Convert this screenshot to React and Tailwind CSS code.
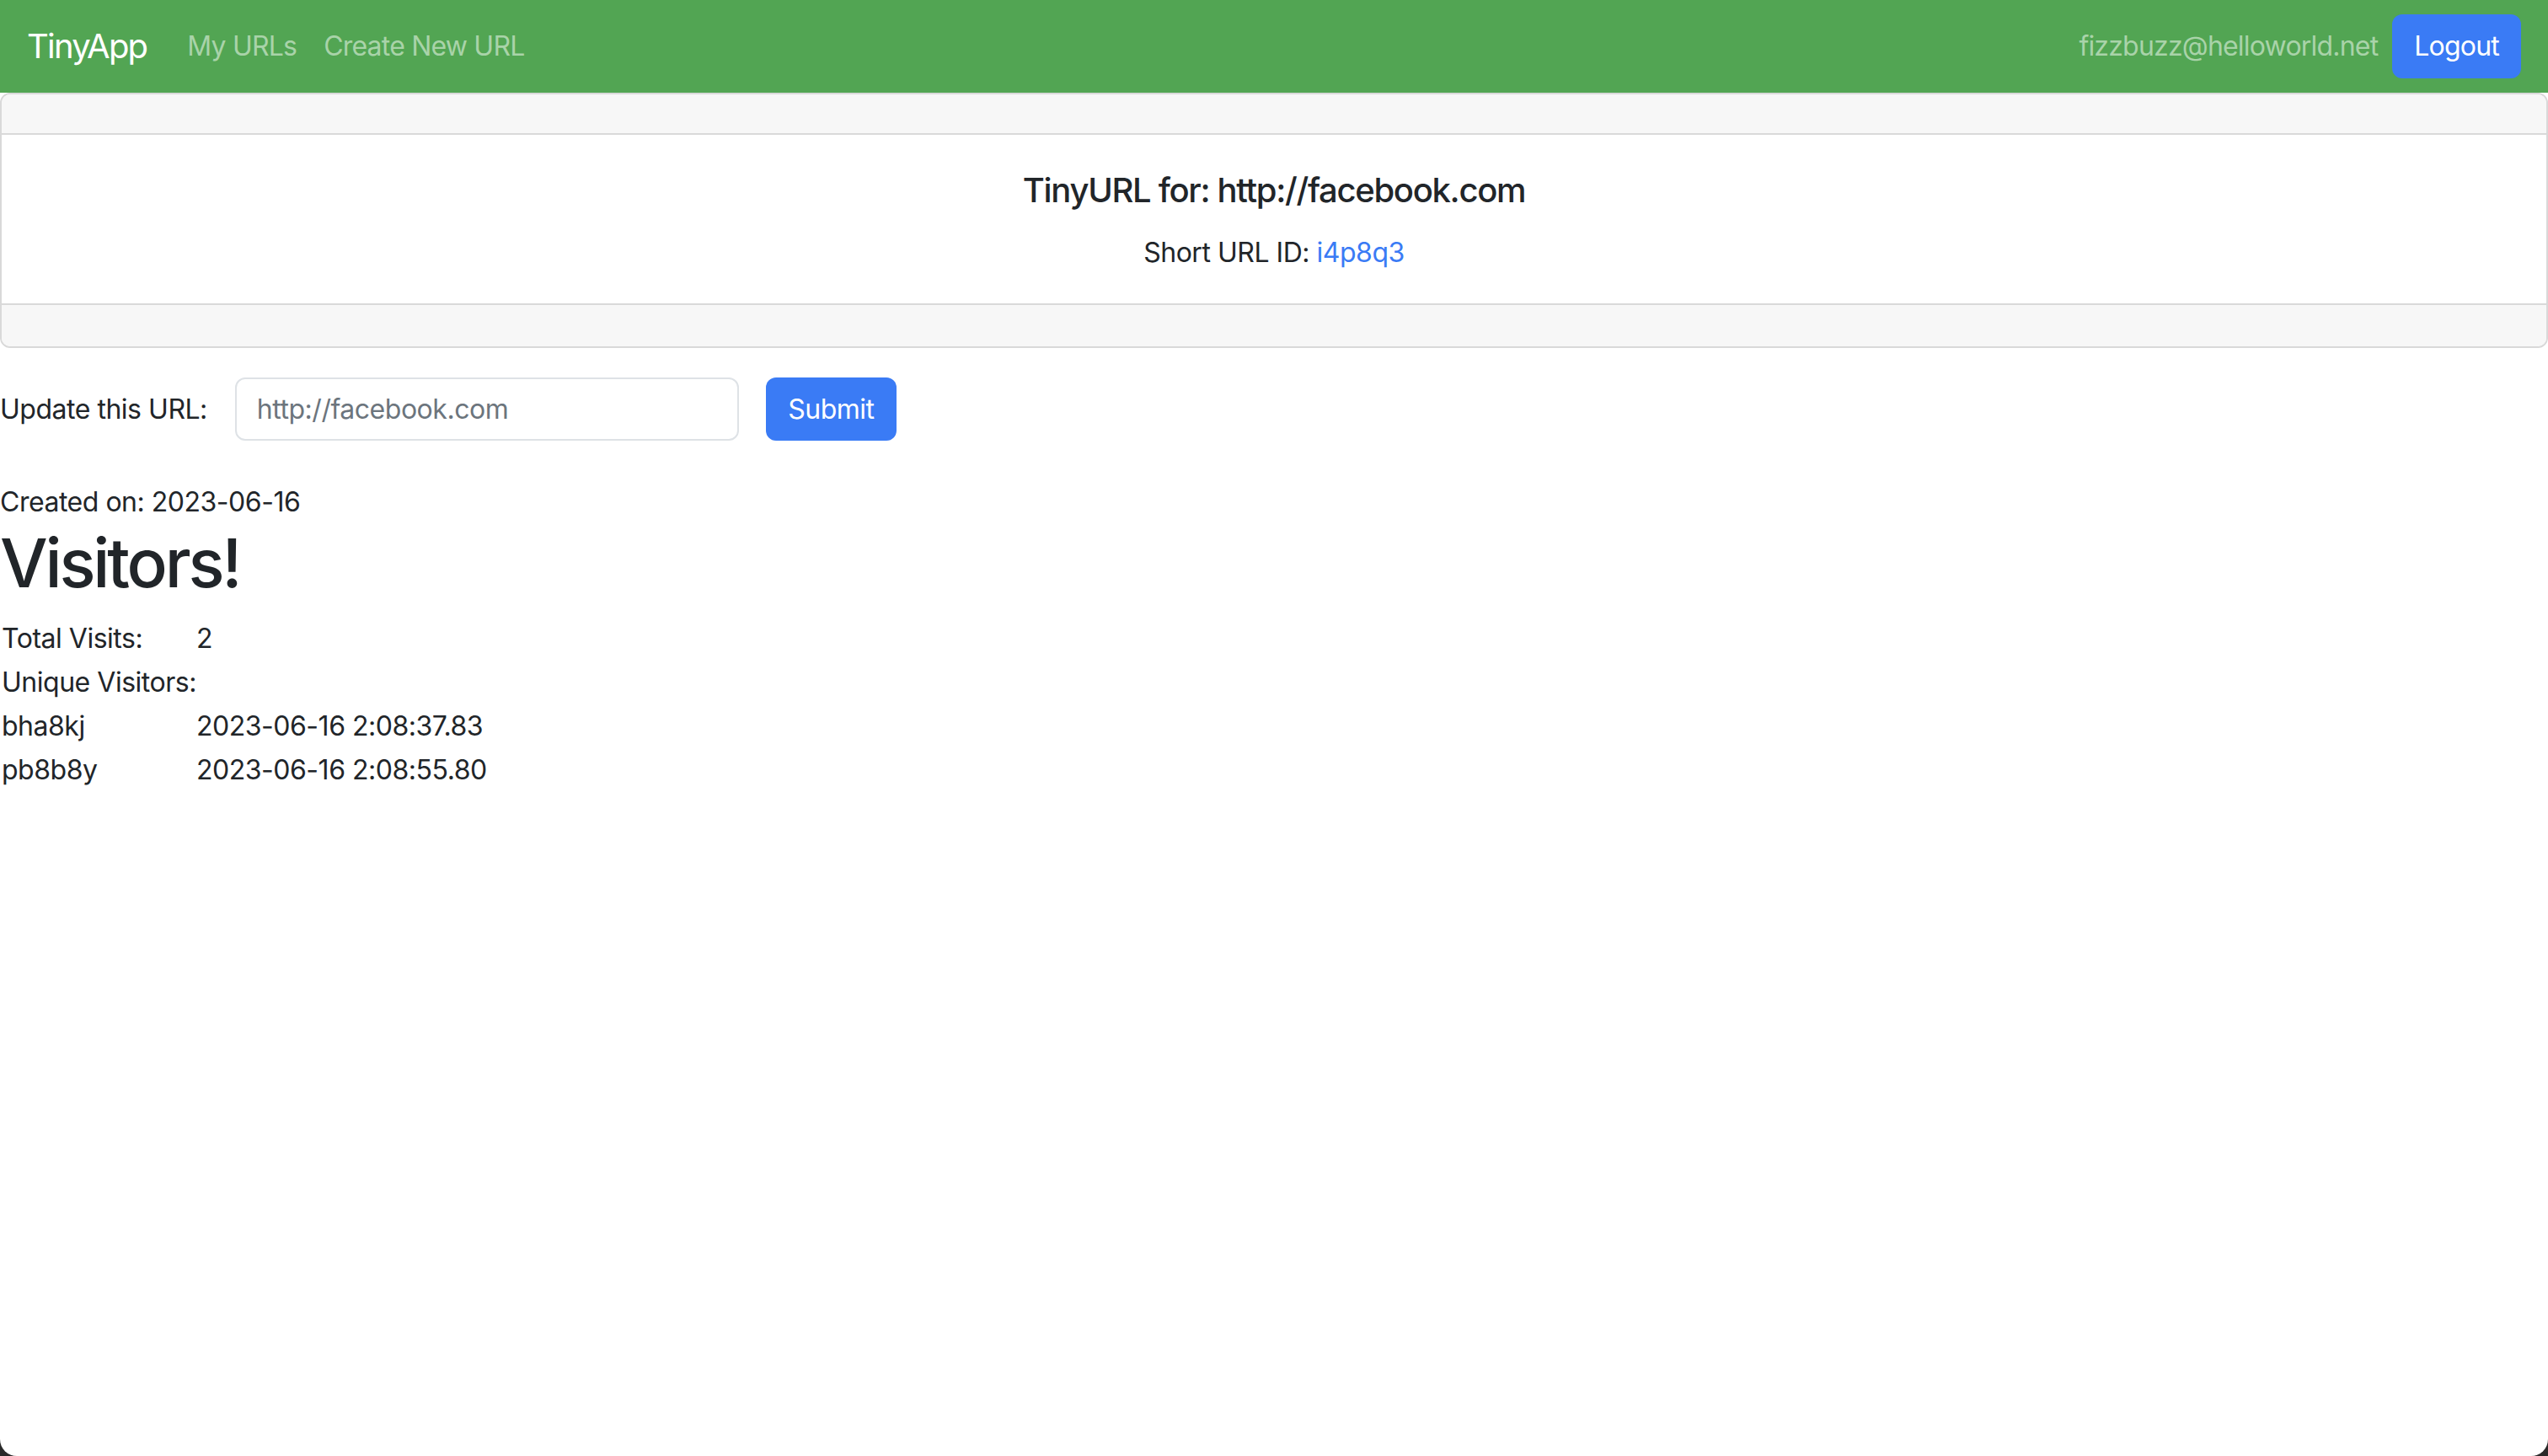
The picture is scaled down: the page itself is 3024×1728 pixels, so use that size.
export default function App() {
  const rows = [
    ["Total Visits:", "2"],
    ["Unique Visitors:", ""],
    ["bha8kj", "2023-06-16 2:08:37.83"],
    ["pb8b8y", "2023-06-16 2:08:55.80"],
  ];
  return (
    <div className="w-[3024px] h-[1728px] bg-[#2a2a2a]">
      <div
        className="w-full h-full bg-white rounded-b-[20px] overflow-hidden text-[#212529] text-[32px] leading-[48px] tracking-[-0.015em]"
        style={{ fontFamily: "Inter, 'Noto Sans', 'Liberation Sans', sans-serif" }}
      >
        {/* Navbar */}
        <nav className="h-[110px] bg-[#52a553] flex items-center justify-between px-[32px]">
          <div className="flex items-center whitespace-nowrap">
            <span className="text-[40px] leading-[60px] text-white mr-[32px] tracking-[-0.045em]">TinyApp</span>
            <span className="px-[16px] text-[#a9d3a9] tracking-[-0.025em]">My URLs</span>
            <span className="px-[16px] text-[#a9d3a9] tracking-[-0.025em]">Create New URL</span>
          </div>
          <div className="flex items-center whitespace-nowrap">
            <span className="text-[#a9d3a9] tracking-[-0.025em]">fizzbuzz@helloworld.net</span>
            <button className="ml-[17px] bg-[#3a7bf5] border-2 border-[#3a7bf5] text-white px-[24px] py-[12px] rounded-[12px] leading-[48px] tracking-[-0.025em]">
              Logout
            </button>
          </div>
        </nav>

        {/* Card */}
        <div className="border-2 border-[#d9d9d9] rounded-[12px] overflow-hidden">
          <div className="h-[48px] bg-[#f7f7f7] border-b-2 border-[#d9d9d9]"></div>
          <div className="h-[200px] flex flex-col items-center pt-[42px]">
            <div className="text-[40px] leading-[48px] font-medium tracking-[-0.033em]">TinyURL for: http://facebook.com</div>
            <div className="mt-[26px] leading-[48px]">
              Short URL ID: <span className="text-[#3a7bf5]">i4p8q3</span>
            </div>
          </div>
          <div className="h-[51px] bg-[#f7f7f7] border-t-2 border-[#d9d9d9]"></div>
        </div>

        {/* Form */}
        <div className="mt-[35px] flex items-center h-[75px] whitespace-nowrap">
          <span>Update this URL:</span>
          <div className="ml-[33px] w-[598px] h-[75px] border-2 border-[#dee2e6] rounded-[12px] px-[24px] flex items-center text-[#6c757d]">
            http://facebook.com
          </div>
          <button className="ml-[32px] w-[155px] h-[75px] bg-[#3a7bf5] text-white rounded-[12px] flex items-center justify-center">
            Submit
          </button>
        </div>

        <div className="mt-[49px] leading-[48px]">Created on: 2023-06-16</div>
        <h1 className="text-[80px] leading-[96px] font-medium mb-[16px] tracking-[-0.04em]">Visitors!</h1>

        <div className="flex flex-col">
          {rows.map(([a, b]) => (
            <div key={a} className="flex py-[2px] whitespace-nowrap">
              <div className="w-[231px] pl-[2px]">{a}</div>
              <div className="pl-[2px]">{b}</div>
            </div>
          ))}
        </div>
      </div>
    </div>
  );
}
